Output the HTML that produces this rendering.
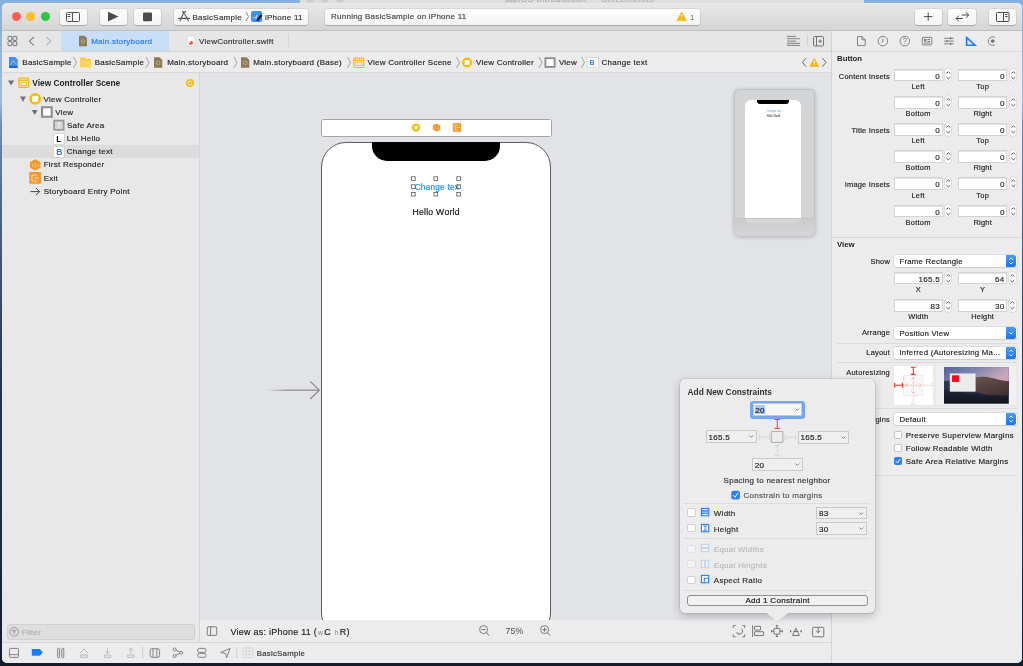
<!DOCTYPE html>
<html><head><meta charset="utf-8">
<style>
*{box-sizing:border-box;margin:0;padding:0}
html,body{width:1023px;height:666px;overflow:hidden;background:#1d2430;font-family:"Liberation Sans",sans-serif;color:#262626}
.a{position:absolute}
svg.i{position:absolute;overflow:visible}
#desk{left:0;top:0;width:1023px;height:666px;background:linear-gradient(#86b0de 0,#9bbbe0 100px,#6a8fc0 125px,#4a6890 200px,#1f3656 380px,#1a2c45 550px,#141c2a 666px)}
#bgwin{left:300px;top:0;width:564px;height:8px;background:#dedede}
#win{left:2px;top:3px;width:1019.6px;height:659.5px;border-radius:5px;background:#ececec}
#toolbar{left:2px;top:3px;width:1019.6px;height:28px;border-radius:5px 5px 0 0;background:linear-gradient(#e8e8e8,#d5d5d5);border-bottom:1px solid #bfbfbf}
.tl{width:9.2px;height:9.2px;border-radius:50%;top:12px}
.tbtn{background:linear-gradient(#fdfdfd,#f4f4f4);border-radius:3px;box-shadow:0 0 0 0.5px rgba(0,0,0,.12),0 1px 1px rgba(0,0,0,.18);height:16.3px;top:8.8px}
#tabs{left:2px;top:31px;width:829px;height:21px;background:#e6e6e6;border-bottom:1px solid #d3d3d3}
#jump{left:2px;top:52px;width:829px;height:21px;background:#ececec;border-bottom:1px solid #d8d8d8}
#nav{left:2px;top:73px;width:197px;height:569px;background:#e8e8e8}
#navsep{left:199px;top:73px;width:1px;height:569px;background:#d6d6d6}
#canvas{left:200px;top:73px;width:631px;height:547px;background:#e2e3e6;overflow:hidden}
#cbar{left:200px;top:620px;width:631px;height:22px;background:#ececec}
#dbg{left:2px;top:642px;width:829px;height:20.5px;background:#ececec;border-top:1px solid #d6d6d6;border-radius:0 0 0 5px}
#insp{left:831px;top:31px;width:190.6px;height:631.5px;background:#ececec;border-left:1px solid #d4d4d4;border-radius:0 0 5px 0}
.t{position:absolute;white-space:nowrap;font-size:8px;letter-spacing:0.25px;line-height:10px;color:#1f1f1f;-webkit-text-stroke:0.16px currentColor}
.s{font-size:7.45px;letter-spacing:0.23px;padding-top:0!important}
.b{font-weight:bold;-webkit-text-stroke:0;padding-top:0!important}
.fld{height:12.7px;background:#fff;border:0.5px solid #d3d3d3;box-shadow:inset 0 0.5px 0 #c8c8c8}
.stp{width:6.7px;height:12.7px;background:#fff;border-radius:3.3px;box-shadow:0 0 0 0.5px #cfcfcf,0 0.5px 0.5px rgba(0,0,0,.1)}
.pop{background:#fff;border-radius:2.5px;box-shadow:0 0 0 0.5px #cdcdcd,0 0.5px 1px rgba(0,0,0,.15)}
.popb{background:linear-gradient(#4e9bf9,#1a74f0);border-radius:0 2.5px 2.5px 0}
.t{padding-top:0.8px}
</style></head><body><div id="root" style="position:absolute;left:0;top:0;width:1023px;height:666px;will-change:transform;overflow:hidden">
<div id="desk" class="a"></div>
<div id="bgwin" class="a"></div>
<svg class="i" style="left:0;top:0" width="1023" height="10"><g fill="#cdcdcd"><circle cx="310" cy="-2" r="4.6"/><circle cx="325" cy="-2" r="4.6"/><circle cx="340" cy="-2" r="4.6"/></g><rect x="505.4" y="-3" width="11.4" height="5.5" fill="#c4c4c4"/></svg>
<div class="t" style="left:518px;top:-6.5px;font-size:8.93px;letter-spacing:0.28px;color:#a8a8a8;-webkit-text-stroke:0">iOS Introduction — Screenshots</div>
<div id="win" class="a"></div>
<div id="toolbar" class="a"></div>
<div class="a tl" style="left:11.6px;background:#fd5e57"></div>
<div class="a tl" style="left:26.2px;background:#febc2e"></div>
<div class="a tl" style="left:40.8px;background:#29c740"></div>
<div class="a tbtn" style="left:60px;width:27px"></div>
<div class="a tbtn" style="left:100px;width:27px"></div>
<div class="a tbtn" style="left:134px;width:27px"></div>
<div class="a tbtn" style="left:174px;width:134px"></div>
<div class="a tbtn" style="left:325px;width:375px;height:16px"></div>
<div class="a tbtn" style="left:915px;width:27px"></div>
<div class="a tbtn" style="left:948px;width:28px"></div>
<div class="a tbtn" style="left:989px;width:27px"></div>
<div id="tabs" class="a"></div>
<div id="jump" class="a"></div>
<div id="nav" class="a"></div>
<div id="navsep" class="a"></div>
<div id="canvas" class="a"></div>
<div id="cbar" class="a"></div>
<div id="dbg" class="a"></div>
<div id="insp" class="a"></div>

<!-- toolbar icons -->
<svg class="i" style="left:0;top:0" width="1023" height="31">
 <g fill="none" stroke="#555" stroke-width="1">
  <rect x="66.5" y="12.5" width="13" height="9" rx="1"/>
  <line x1="72.5" y1="12.5" x2="72.5" y2="21.5"/>
 </g>
 <g fill="#555"><rect x="67.5" y="14" width="3" height="1"/><rect x="67.5" y="16" width="3" height="1"/></g>
 <path d="M108 11.8 L118.5 16.6 L108 21.4 Z" fill="#4b4b4b"/>
 <rect x="143" y="12.4" width="9" height="8.8" rx="1" fill="#4b4b4b"/>
 <g fill="none" stroke="#5a5a5a" stroke-width="0.9">
  <path d="M182 11.9 H186.2 M184 12.2 L179.8 21.3 M184.3 13.6 L188.6 21.3 M178.2 18.4 H189.8" stroke="#555" stroke-width="1.1"/>
  <path d="M246 12 L248.5 16.6 L246 21.2" stroke="#777"/>
 </g>
 <rect x="251" y="11" width="11.2" height="11" rx="2.2" fill="#3593f5"/>
 <path d="M253 18.5 L254.8 16.8 L256 18.5 L256.8 14.5" stroke="#dff0ff" stroke-width="0.8" fill="none"/>
 <path d="M260.8 14.2 L262.2 15.8 L258 21.6 L256.4 20 Z" fill="#111"/>
 <path d="M681.6 12.2 L686.3 20.6 H676.9 Z" fill="#f5b915" stroke="#f5b915" stroke-width="0.8" stroke-linejoin="round"/>
 <rect x="681.1" y="14.6" width="1" height="3.2" fill="#fff"/><rect x="681.1" y="18.6" width="1" height="1" fill="#fff"/>
 <g stroke="#4a4a4a" stroke-width="1" fill="none">
  <path d="M924 16.6 H932.5 M928.2 12.5 V20.8"/>
  <path d="M961.6 15 H968.6 M965.8 12.2 L968.7 15 L965.8 17.8 M962.8 18.5 H956 M958.8 15.7 L956 18.5 L958.8 21.3"/>
  <rect x="996.5" y="12.5" width="12.5" height="9" rx="0.8"/>
  <line x1="1003.5" y1="12.5" x2="1003.5" y2="21.5"/>
 </g>
 <g fill="#4a4a4a"><rect x="1005" y="14" width="2.5" height="1"/><rect x="1005" y="16" width="2.5" height="1"/></g>
</svg>
<div class="t" style="left:192.5px;top:12px;color:#333">BasicSample</div>
<div class="t" style="left:265px;top:12px;color:#333">iPhone 11</div>
<div class="t" style="left:331px;top:11.5px;color:#444">Running BasicSample on iPhone 11</div>
<div class="t" style="left:690px;top:12px;color:#666;font-size:7.52px;letter-spacing:0.24px;-webkit-text-stroke:0">1</div>

<!-- tab bar -->
<div class="a" style="left:61px;top:31px;width:107.5px;height:20px;background:#c8ddf6"></div>
<div class="a" style="left:288px;top:34px;width:1px;height:14px;background:#d6d6d6"></div>
<div class="a" style="left:807px;top:36px;width:1px;height:10px;background:#d0d0d0"></div>
<svg class="i" style="left:0;top:0" width="831" height="73">
 <g fill="none" stroke="#6a6a6a" stroke-width="0.9">
  <rect x="8" y="36.4" width="3.8" height="4" rx="0.6"/><rect x="13" y="36.4" width="3.8" height="4" rx="0.6"/>
  <rect x="8" y="41.6" width="3.8" height="4" rx="0.6"/><rect x="13" y="41.6" width="3.8" height="4" rx="0.6"/>
  <path d="M34 37 L29.2 41.2 L34 45.4" stroke="#555" stroke-width="1"/>
  <path d="M46.2 37 L50.8 41.2 L46.2 45.4" stroke="#a0a0a0" stroke-width="1"/>
 </g>
 <!-- storyboard icon tab -->
 <path d="M79 35.8 H84.5 L87 38.3 V46.3 H79 Z" fill="#8d7a58"/>
 <circle cx="83" cy="41.5" r="1.8" fill="none" stroke="#c9b78f" stroke-width="0.8"/>
 <!-- swift file icon -->
 <path d="M187 36 H192.5 L195 38.5 V46.3 H187 Z" fill="#fafafa" stroke="#cfcfcf" stroke-width="0.5"/>
 <path d="M188.5 42 q2 2 4.5 1.5 q-1 1.5 -3.5 1.3 z" fill="#f05138"/>
 <circle cx="191.5" cy="42.5" r="1.5" fill="#f05138"/>
 <!-- right icons -->
 <g stroke="#777" stroke-width="0.9">
  <line x1="787" y1="36.4" x2="796" y2="36.4"/><line x1="787" y1="38.7" x2="800" y2="38.7"/>
  <line x1="787" y1="41.1" x2="796" y2="41.1"/><line x1="787" y1="43.3" x2="800" y2="43.3"/>
  <line x1="787" y1="45.4" x2="800" y2="45.4"/>
 </g>
 <g fill="none" stroke="#666" stroke-width="0.9">
  <rect x="813.5" y="36.5" width="10" height="9.5" rx="1"/>
  <line x1="816.5" y1="36.5" x2="816.5" y2="46"/>
  <path d="M818.5 41.2 H822 M820.2 39.5 V43"/>
 </g>
 <!-- jump bar icons -->
 <path d="M9 57 H15 L17.6 59.6 V68 H9 Z" fill="#3f8ef2"/>
 <path d="M9 66 H17.6 V68 H9 Z" fill="#1f6ad8"/>
 <path d="M10.5 64.5 L13.3 60.5 L16 64.5" stroke="#bfe0ff" stroke-width="0.7" fill="none"/>
 <path d="M80.2 57.6 H85 L86 58.8 H91.1 V67.2 H80.2 Z" fill="#f7c744"/>
 <path d="M80.2 59.8 H91.1 V67.2 H80.2 Z" fill="#fbd45a"/>
 <path d="M154 57.2 H159.5 L162.3 60 V67.8 H154 Z" fill="#8d7a58"/>
 <circle cx="158.2" cy="62.8" r="1.8" fill="none" stroke="#c9b78f" stroke-width="0.8"/>
 <path d="M241 57.2 H246.5 L249.3 60 V67.8 H241 Z" fill="#8d7a58"/>
 <circle cx="245.2" cy="62.8" r="1.8" fill="none" stroke="#c9b78f" stroke-width="0.8"/>
 <!-- scene icon -->
 <rect x="353.8" y="58" width="10" height="9.5" rx="1" fill="none" stroke="#f4b400" stroke-width="1.1"/>
 <path d="M353.8 60.5 H363.8" stroke="#f4b400" stroke-width="1"/>
 <path d="M355.5 58 v2.3 M357.5 58 v2.3 M359.5 58 v2.3 M361.5 58 v2.3" stroke="#f4b400" stroke-width="0.6"/>
 <rect x="355.8" y="62.2" width="6" height="3.3" fill="none" stroke="#f4b400" stroke-width="0.7"/>
 <!-- VC icon -->
 <circle cx="467.1" cy="62.5" r="5" fill="#fcb900"/>
 <rect x="464.6" y="60" width="5" height="5" fill="#fff"/>
 <!-- view icon -->
 <rect x="544.5" y="57.3" width="11" height="10.5" fill="#8a8a8a"/>
 <rect x="546.3" y="59.1" width="7.4" height="6.9" fill="#fff"/>
 <!-- B icon -->
 <rect x="587" y="57.3" width="11.4" height="10.5" fill="#fff" stroke="#c8c8c8" stroke-width="0.6"/>
 <g fill="none" stroke="#8e8e8e" stroke-width="0.8">
  <path d="M73.5 57 L76.5 62.4 L73.5 67.8"/>
  <path d="M146 57 L149 62.4 L146 67.8"/>
  <path d="M234 57 L237 62.4 L234 67.8"/>
  <path d="M347.5 57 L350.5 62.4 L347.5 67.8"/>
  <path d="M456.5 57 L459.5 62.4 L456.5 67.8"/>
  <path d="M539 57 L542 62.4 L539 67.8"/>
  <path d="M581.5 57 L584.5 62.4 L581.5 67.8"/>
 </g>
 <g fill="none" stroke="#666" stroke-width="1">
  <path d="M806 58.2 L802.5 62.4 L806 66.6"/>
  <path d="M822.5 58.2 L826 62.4 L822.5 66.6"/>
 </g>
 <path d="M814.2 58.2 L818.6 66.4 H809.8 Z" fill="#f5b915" stroke="#f5b915" stroke-width="0.8" stroke-linejoin="round"/>
 <rect x="813.7" y="60.4" width="1" height="3.2" fill="#fff"/><rect x="813.7" y="64.4" width="1" height="1" fill="#fff"/>
</svg>
<div class="t" style="left:91.2px;top:36px;color:#1f7bf0">Main.storyboard</div>
<div class="t" style="left:199px;top:36px;color:#333">ViewController.swift</div>
<div class="t" style="left:22.3px;top:57.3px">BasicSample</div>
<div class="t" style="left:94.7px;top:57.3px">BasicSample</div>
<div class="t" style="left:167.2px;top:57.3px">Main.storyboard</div>
<div class="t" style="left:253.2px;top:57.3px">Main.storyboard (Base)</div>
<div class="t" style="left:367.5px;top:57.3px">View Controller Scene</div>
<div class="t" style="left:476px;top:57.3px">View Controller</div>
<div class="t" style="left:558.9px;top:57.3px">View</div>
<div class="t" style="left:601.6px;top:57.3px">Change text</div>
<div class="t b" style="letter-spacing:0;left:589.6px;top:57.8px;color:#2f7cf6;font-size:7px">B</div>

<!-- navigator -->
<div class="a" style="left:2px;top:145px;width:197px;height:13px;background:#dcdcdc"></div>
<svg class="i" style="left:0;top:0" width="200" height="642">
 <g fill="#707070">
  <path d="M8 80.4 H14.2 L11.1 85.5 Z"/>
  <path d="M20 96.6 H26 L23 101.8 Z"/>
  <path d="M31.8 110 H37.6 L34.7 115 Z"/>
 </g>
 <!-- scene icon -->
 <rect x="18.9" y="78" width="9.6" height="9.4" rx="1.2" fill="none" stroke="#f4b400" stroke-width="1.2"/>
 <path d="M18.9 80.7 H28.5" stroke="#f4b400" stroke-width="1"/>
 <path d="M20.8 78 v2.5 M22.8 78 v2.5 M24.8 78 v2.5 M26.8 78 v2.5" stroke="#f4b400" stroke-width="0.6"/>
 <rect x="20.9" y="82.7" width="5.6" height="2.8" fill="none" stroke="#f4b400" stroke-width="0.8"/>
 <!-- vc -->
 <circle cx="35.2" cy="98.9" r="5.9" fill="#fcb900"/>
 <rect x="32.2" y="95.9" width="6" height="6" fill="#fff"/>
 <!-- view -->
 <rect x="41" y="106.2" width="11.8" height="11.6" fill="#8f8f8f"/>
 <rect x="43.2" y="108.3" width="7.4" height="7.4" fill="#fff"/>
 <!-- safe area -->
 <rect x="53.3" y="119.7" width="11.2" height="11" fill="#9a9a9a"/>
 <rect x="55.2" y="121.6" width="7.4" height="7.2" fill="#e6e6e6"/>
 <path d="M57 122.5 v5.5 M60.8 122.5 v5.5" stroke="#aaa" stroke-width="0.6"/>
 <!-- L -->
 <rect x="53.4" y="133.4" width="11" height="10.8" fill="#fff" stroke="#c4c4c4" stroke-width="0.6"/>
 <!-- B -->
 <rect x="53.4" y="146.6" width="11" height="10.8" fill="#fff" stroke="#c4c4c4" stroke-width="0.6"/>
 <!-- first responder hex -->
 <path d="M35.3 159.2 L40.5 162 V167.8 L35.3 170.6 L30 167.8 V162 Z" fill="#f29a2e"/>
 <path d="M32.5 164 v3 M38 164 v3 M35.3 163 v4.5" stroke="#fbd7a6" stroke-width="0.6"/>
 <!-- exit -->
 <rect x="29.3" y="172" width="11.7" height="11.8" rx="1" fill="#f29a2e"/>
 <path d="M37 175 H32 V181 H37 M34.5 178 H39" stroke="#fde2bf" stroke-width="0.9" fill="none"/>
 <!-- arrow -->
 <path d="M30.5 191.6 H39.5 M36 188 L39.6 191.6 L36 195.2" stroke="#333" stroke-width="0.9" fill="none"/>
 <!-- scene exit icon right -->
 <circle cx="190" cy="83" r="3.2" fill="none" stroke="#fcb900" stroke-width="1.6"/>
 <path d="M188.8 82 h1.6 v-1 l1.5 2 l-1.5 2 v-1 h-1.6 z" fill="#fcb900"/>
</svg>
<div class="t b" style="letter-spacing:0;left:32.3px;top:77.9px;font-size:8.35px">View Controller Scene</div>
<div class="t" style="left:43.5px;top:93.8px">View Controller</div>
<div class="t" style="left:55.2px;top:106.8px">View</div>
<div class="t" style="left:67px;top:120.2px">Safe Area</div>
<div class="t" style="left:66.8px;top:133.4px">Lbl Hello</div>
<div class="t" style="left:66.8px;top:146.7px">Change text</div>
<div class="t" style="left:43.7px;top:159.6px">First Responder</div>
<div class="t" style="left:43.7px;top:173px">Exit</div>
<div class="t" style="left:43.7px;top:186.1px">Storyboard Entry Point</div>
<div class="t b" style="letter-spacing:0;left:56.3px;top:134px;font-size:8.5px;color:#111">L</div>
<div class="t b" style="letter-spacing:0;left:56.2px;top:147.3px;font-size:8.5px;color:#2f7cf6">B</div>
<!-- filter -->
<div class="a" style="left:6.5px;top:624px;width:188.5px;height:15.5px;border-radius:3px;background:#dedede;border:0.5px solid #d0d0d0"></div>
<svg class="i" style="left:0;top:0" width="200" height="642">
 <circle cx="14.1" cy="631.8" r="4.4" fill="none" stroke="#8a8a8a" stroke-width="0.8"/>
 <path d="M11.8 630.3 H16.4 M12.6 631.8 H15.6 M13.4 633.3 H14.8" stroke="#8a8a8a" stroke-width="0.8"/>
</svg>
<div class="t" style="left:21.8px;top:627px;color:#b0b0b0">Filter</div>

<!-- canvas content -->
<div class="a" style="left:200px;top:73px;width:631px;height:547px;overflow:hidden"><div class="a" style="left:-200px;top:-73px;width:1023px;height:666px">
<div class="a" style="left:321px;top:118.5px;width:230.5px;height:18.2px;background:#fff;border:1px solid #a5a5a5;border-radius:2.5px"></div>
<svg class="i" style="left:0;top:0" width="831" height="642">
 <circle cx="416" cy="127.6" r="4.2" fill="#fcb900"/><rect x="414.3" y="125.9" width="3.4" height="3.4" fill="#fff"/>
 <path d="M436.5 123.4 L440.2 125.5 V129.7 L436.5 131.8 L432.8 129.7 V125.5 Z" fill="#f29a2e"/>
 <path d="M434.6 126.8 v2.2 M438.4 126.8 v2.2" stroke="#fbd7a6" stroke-width="0.5"/>
 <rect x="452.8" y="123.2" width="8.4" height="8.6" fill="#f29a2e"/>
 <path d="M458 125.2 H455 V129.8 H458 M456.5 127.5 H460" stroke="#fde2bf" stroke-width="0.7" fill="none"/>
 <!-- arrow -->
 <defs><linearGradient id="ag" x1="0" x2="1"><stop offset="0" stop-color="#8a8a8a" stop-opacity="0"/><stop offset="0.4" stop-color="#8a8a8a" stop-opacity="1"/></linearGradient></defs>
 <rect x="266" y="389.6" width="53.5" height="1.2" fill="url(#ag)"/>
 <path d="M310.3 381.4 L319.3 390.2 L310.3 399" stroke="#8a8a8a" stroke-width="1.2" fill="none"/>
</svg>
<!-- phone -->
<div class="a" style="left:321px;top:142.4px;width:230px;height:496px;background:#fff;border:1px solid #5a5a5a;border-radius:25px"></div>
<div class="a" style="left:372px;top:142.4px;width:128px;height:18.8px;background:#000;border-radius:0 0 15px 15px"></div>
<!-- handles -->
<svg class="i" style="left:0;top:0" width="831" height="642">
 <g fill="#fff" stroke="#555" stroke-width="0.8">
  <rect x="411.6" y="176.8" width="3.6" height="3.6"/><rect x="434" y="176.8" width="3.6" height="3.6"/><rect x="456.8" y="176.8" width="3.6" height="3.6"/>
  <rect x="411.6" y="192.4" width="3.6" height="3.6"/><rect x="434" y="192.4" width="3.6" height="3.6"/><rect x="456.8" y="192.4" width="3.6" height="3.6"/>
 </g>
</svg>
<div class="a" style="left:413.4px;top:177px;width:45.8px;height:17px;overflow:hidden"><div class="t" style="left:1.3px;top:4.9px;color:#1a8cff;font-size:8.18px;letter-spacing:0.26px">Change text</div></div>
<svg class="i" style="left:0;top:0" width="831" height="642">
 <g fill="none" stroke="#555" stroke-width="0.8">
  <rect x="411.6" y="184.8" width="3.6" height="3.6"/><rect x="456.8" y="184.8" width="3.6" height="3.6"/>
 </g>
</svg>
<div class="t" style="left:412.4px;top:206px;color:#111;font-size:8.65px;letter-spacing:0.28px;line-height:10px">Hello World</div>
<!-- minimap -->
<div class="a" style="left:733.6px;top:88.6px;width:81.5px;height:147.4px;background:#d3d4d6;border-radius:5px;box-shadow:0 1px 4px rgba(0,0,0,.22);border:0.5px solid #c2c3c5"></div>
<div class="a" style="left:745px;top:99.6px;width:56px;height:123px;background:#fff;border-radius:6px"></div>
<div class="a" style="left:757px;top:99.6px;width:32px;height:4.8px;background:#000;border-radius:0 0 3px 3px"></div>
<div class="a" style="left:766.8px;top:109.6px;font-size:2.7px;line-height:3px;color:#5d9ff0;white-space:nowrap;font-family:'Liberation Sans'">Change text</div>
<div class="a" style="left:766.8px;top:115.3px;font-size:2.6px;line-height:3px;color:#222;white-space:nowrap;font-family:'Liberation Sans'">Hello World</div>
<div class="a" style="left:733.8px;top:218.3px;width:81.2px;height:17.6px;background:linear-gradient(rgba(200,200,200,.75),rgba(215,215,215,.9));border-radius:0 0 5px 5px;border-top:0.6px solid #c4c4c4"></div>
</div></div>


<!-- inspector -->
<div class="a" style="left:832px;top:51px;width:189px;height:1px;background:#d6d6d6"></div>
<div class="a" style="left:832px;top:237px;width:189px;height:1px;background:#d6d6d6"></div>
<svg class="i" style="left:0;top:0" width="1023" height="666">
 <g fill="none" stroke="#777" stroke-width="0.9">
  <path d="M857.5 36.6 H862 L865.2 39.8 V45.6 H857.5 Z M862 36.6 V39.8 H865.2"/>
  <circle cx="882.9" cy="41.1" r="4.8"/><path d="M882.9 38.5 V41.3 L881.3 42.6"/>
  <circle cx="904.8" cy="41.1" r="4.8"/>
  <rect x="922.3" y="37.4" width="9.5" height="7.5" rx="0.5"/>
  <path d="M944 38.3 H953.8 M944 41.1 H953.8 M944 43.9 H953.8"/>
  <circle cx="992.6" cy="41.1" r="4.3"/>
 </g>
 <path d="M903.3 39.6 q0 -1.6 1.6 -1.6 q1.6 0 1.6 1.5 q0 1 -1.2 1.5 q-0.5 0.3 -0.5 1.1" fill="none" stroke="#777" stroke-width="0.8"/>
 <rect x="904.4" y="43.3" width="0.9" height="0.9" fill="#777"/>
 <g fill="#777"><rect x="924" y="39" width="2.5" height="2.5"/><rect x="927.5" y="39" width="2.5" height="1"/><rect x="927.5" y="41" width="2.5" height="1"/><rect x="923.8" y="42.6" width="6.5" height="0.9"/>
 <rect x="950" y="37.2" width="1.2" height="2.2"/><rect x="946.5" y="40" width="1.2" height="2.2"/><rect x="950" y="42.8" width="1.2" height="2.2"/></g>
 <path d="M966.6 37.6 V45.2 H975 Z" fill="none" stroke="#1b7cf5" stroke-width="1.6" stroke-linejoin="miter"/>
 <circle cx="992.6" cy="41.1" r="1.8" fill="#777"/><path d="M992.6 41.1 H997.5" stroke="#777" stroke-width="0.9"/>
 <rect x="995" y="36" width="4" height="10" fill="#ececec"/>
 <path d="M995.5 37.5 L996.8 36.5" stroke="#777" stroke-width="0"/>
</svg>
<div class="t b s" style="letter-spacing:0;left:837px;top:54.2px;font-size:7.8px;color:#222">Button</div>
<div class="a fld" style="left:893.5px;top:68.7px;width:49.2px"></div>
<div class="t" style="left:893.5px;top:70.85000000000001px;width:46.6px;text-align:right;font-size:8.08px;letter-spacing:0.26px">0</div>
<div class="a stp" style="left:944.7px;top:68.7px"></div>
<svg class="i" style="left:944.7px;top:68.7px" width="7" height="13"><path d="M1.4 4.5 L3.35 2.8 L5.3 4.5 M1.4 8.1 L3.35 9.9 L5.3 8.1" fill="none" stroke="#4a4a4a" stroke-width="0.95"/></svg>
<div class="a fld" style="left:958.2px;top:68.7px;width:49.2px"></div>
<div class="t" style="left:958.2px;top:70.85000000000001px;width:46.6px;text-align:right;font-size:8.08px;letter-spacing:0.26px">0</div>
<div class="a stp" style="left:1009.6px;top:68.7px"></div>
<svg class="i" style="left:1009.6px;top:68.7px" width="7" height="13"><path d="M1.4 4.5 L3.35 2.8 L5.3 4.5 M1.4 8.1 L3.35 9.9 L5.3 8.1" fill="none" stroke="#4a4a4a" stroke-width="0.95"/></svg>
<div class="t s" style="left:888.1px;top:81.9px;width:60px;text-align:center">Left</div>
<div class="t s" style="left:952.7px;top:81.9px;width:60px;text-align:center">Top</div>
<div class="t s" style="left:810px;top:71.5px;width:80px;text-align:right">Content Insets</div>
<div class="a fld" style="left:893.5px;top:95.9px;width:49.2px"></div>
<div class="t" style="left:893.5px;top:98.05000000000001px;width:46.6px;text-align:right;font-size:8.08px;letter-spacing:0.26px">0</div>
<div class="a stp" style="left:944.7px;top:95.9px"></div>
<svg class="i" style="left:944.7px;top:95.9px" width="7" height="13"><path d="M1.4 4.5 L3.35 2.8 L5.3 4.5 M1.4 8.1 L3.35 9.9 L5.3 8.1" fill="none" stroke="#4a4a4a" stroke-width="0.95"/></svg>
<div class="a fld" style="left:958.2px;top:95.9px;width:49.2px"></div>
<div class="t" style="left:958.2px;top:98.05000000000001px;width:46.6px;text-align:right;font-size:8.08px;letter-spacing:0.26px">0</div>
<div class="a stp" style="left:1009.6px;top:95.9px"></div>
<svg class="i" style="left:1009.6px;top:95.9px" width="7" height="13"><path d="M1.4 4.5 L3.35 2.8 L5.3 4.5 M1.4 8.1 L3.35 9.9 L5.3 8.1" fill="none" stroke="#4a4a4a" stroke-width="0.95"/></svg>
<div class="t s" style="left:888.1px;top:109.1px;width:60px;text-align:center">Bottom</div>
<div class="t s" style="left:952.7px;top:109.1px;width:60px;text-align:center">Right</div>
<div class="a fld" style="left:893.5px;top:123.1px;width:49.2px"></div>
<div class="t" style="left:893.5px;top:125.25px;width:46.6px;text-align:right;font-size:8.08px;letter-spacing:0.26px">0</div>
<div class="a stp" style="left:944.7px;top:123.1px"></div>
<svg class="i" style="left:944.7px;top:123.1px" width="7" height="13"><path d="M1.4 4.5 L3.35 2.8 L5.3 4.5 M1.4 8.1 L3.35 9.9 L5.3 8.1" fill="none" stroke="#4a4a4a" stroke-width="0.95"/></svg>
<div class="a fld" style="left:958.2px;top:123.1px;width:49.2px"></div>
<div class="t" style="left:958.2px;top:125.25px;width:46.6px;text-align:right;font-size:8.08px;letter-spacing:0.26px">0</div>
<div class="a stp" style="left:1009.6px;top:123.1px"></div>
<svg class="i" style="left:1009.6px;top:123.1px" width="7" height="13"><path d="M1.4 4.5 L3.35 2.8 L5.3 4.5 M1.4 8.1 L3.35 9.9 L5.3 8.1" fill="none" stroke="#4a4a4a" stroke-width="0.95"/></svg>
<div class="t s" style="left:888.1px;top:136.29999999999998px;width:60px;text-align:center">Left</div>
<div class="t s" style="left:952.7px;top:136.29999999999998px;width:60px;text-align:center">Top</div>
<div class="t s" style="left:810px;top:125.89999999999998px;width:80px;text-align:right">Title Insets</div>
<div class="a fld" style="left:893.5px;top:150.2px;width:49.2px"></div>
<div class="t" style="left:893.5px;top:152.35px;width:46.6px;text-align:right;font-size:8.08px;letter-spacing:0.26px">0</div>
<div class="a stp" style="left:944.7px;top:150.2px"></div>
<svg class="i" style="left:944.7px;top:150.2px" width="7" height="13"><path d="M1.4 4.5 L3.35 2.8 L5.3 4.5 M1.4 8.1 L3.35 9.9 L5.3 8.1" fill="none" stroke="#4a4a4a" stroke-width="0.95"/></svg>
<div class="a fld" style="left:958.2px;top:150.2px;width:49.2px"></div>
<div class="t" style="left:958.2px;top:152.35px;width:46.6px;text-align:right;font-size:8.08px;letter-spacing:0.26px">0</div>
<div class="a stp" style="left:1009.6px;top:150.2px"></div>
<svg class="i" style="left:1009.6px;top:150.2px" width="7" height="13"><path d="M1.4 4.5 L3.35 2.8 L5.3 4.5 M1.4 8.1 L3.35 9.9 L5.3 8.1" fill="none" stroke="#4a4a4a" stroke-width="0.95"/></svg>
<div class="t s" style="left:888.1px;top:163.39999999999998px;width:60px;text-align:center">Bottom</div>
<div class="t s" style="left:952.7px;top:163.39999999999998px;width:60px;text-align:center">Right</div>
<div class="a fld" style="left:893.5px;top:177.4px;width:49.2px"></div>
<div class="t" style="left:893.5px;top:179.55px;width:46.6px;text-align:right;font-size:8.08px;letter-spacing:0.26px">0</div>
<div class="a stp" style="left:944.7px;top:177.4px"></div>
<svg class="i" style="left:944.7px;top:177.4px" width="7" height="13"><path d="M1.4 4.5 L3.35 2.8 L5.3 4.5 M1.4 8.1 L3.35 9.9 L5.3 8.1" fill="none" stroke="#4a4a4a" stroke-width="0.95"/></svg>
<div class="a fld" style="left:958.2px;top:177.4px;width:49.2px"></div>
<div class="t" style="left:958.2px;top:179.55px;width:46.6px;text-align:right;font-size:8.08px;letter-spacing:0.26px">0</div>
<div class="a stp" style="left:1009.6px;top:177.4px"></div>
<svg class="i" style="left:1009.6px;top:177.4px" width="7" height="13"><path d="M1.4 4.5 L3.35 2.8 L5.3 4.5 M1.4 8.1 L3.35 9.9 L5.3 8.1" fill="none" stroke="#4a4a4a" stroke-width="0.95"/></svg>
<div class="t s" style="left:888.1px;top:190.6px;width:60px;text-align:center">Left</div>
<div class="t s" style="left:952.7px;top:190.6px;width:60px;text-align:center">Top</div>
<div class="t s" style="left:810px;top:180.2px;width:80px;text-align:right">Image Insets</div>
<div class="a fld" style="left:893.5px;top:204.6px;width:49.2px"></div>
<div class="t" style="left:893.5px;top:206.75px;width:46.6px;text-align:right;font-size:8.08px;letter-spacing:0.26px">0</div>
<div class="a stp" style="left:944.7px;top:204.6px"></div>
<svg class="i" style="left:944.7px;top:204.6px" width="7" height="13"><path d="M1.4 4.5 L3.35 2.8 L5.3 4.5 M1.4 8.1 L3.35 9.9 L5.3 8.1" fill="none" stroke="#4a4a4a" stroke-width="0.95"/></svg>
<div class="a fld" style="left:958.2px;top:204.6px;width:49.2px"></div>
<div class="t" style="left:958.2px;top:206.75px;width:46.6px;text-align:right;font-size:8.08px;letter-spacing:0.26px">0</div>
<div class="a stp" style="left:1009.6px;top:204.6px"></div>
<svg class="i" style="left:1009.6px;top:204.6px" width="7" height="13"><path d="M1.4 4.5 L3.35 2.8 L5.3 4.5 M1.4 8.1 L3.35 9.9 L5.3 8.1" fill="none" stroke="#4a4a4a" stroke-width="0.95"/></svg>
<div class="t s" style="left:888.1px;top:217.79999999999998px;width:60px;text-align:center">Bottom</div>
<div class="t s" style="left:952.7px;top:217.79999999999998px;width:60px;text-align:center">Right</div>
<div class="t b s" style="letter-spacing:0;left:837px;top:240px;font-size:7.8px;color:#222">View</div>
<div class="a pop" style="left:894px;top:255.3px;width:122.5px;height:12px"></div>
<div class="a popb" style="left:1006.4px;top:255.3px;width:10.1px;height:12px"></div>
<svg class="i" style="left:1006.4px;top:255.3px" width="10" height="12"><path d="M3.3 4.7 L5.05 3 L6.8 4.7 M3.3 7.3 L5.05 9 L6.8 7.3" fill="none" stroke="#fff" stroke-width="0.9"/></svg>
<div class="t" style="left:899.4px;top:256.40000000000003px;color:#222;font-size:7.80px;letter-spacing:0.25px">Frame Rectangle</div>
<div class="t s" style="left:810px;top:256.90000000000003px;width:80px;text-align:right">Show</div>
<div class="a fld" style="left:894px;top:271.8px;width:48.7px"></div>
<div class="t" style="left:894px;top:273.95px;width:46.1px;text-align:right;font-size:8.08px;letter-spacing:0.26px">165.5</div>
<div class="a stp" style="left:944.6px;top:271.8px"></div>
<svg class="i" style="left:944.6px;top:271.8px" width="7" height="13"><path d="M1.4 4.5 L3.35 2.8 L5.3 4.5 M1.4 8.1 L3.35 9.9 L5.3 8.1" fill="none" stroke="#4a4a4a" stroke-width="0.95"/></svg>
<div class="a fld" style="left:958.3px;top:271.8px;width:48.9px"></div>
<div class="t" style="left:958.3px;top:273.95px;width:46.3px;text-align:right;font-size:8.08px;letter-spacing:0.26px">64</div>
<div class="a stp" style="left:1009.3px;top:271.8px"></div>
<svg class="i" style="left:1009.3px;top:271.8px" width="7" height="13"><path d="M1.4 4.5 L3.35 2.8 L5.3 4.5 M1.4 8.1 L3.35 9.9 L5.3 8.1" fill="none" stroke="#4a4a4a" stroke-width="0.95"/></svg>
<div class="t s" style="left:888.3px;top:284.70000000000005px;width:60px;text-align:center">X</div>
<div class="t s" style="left:952.7px;top:284.70000000000005px;width:60px;text-align:center">Y</div>
<div class="a fld" style="left:894px;top:299px;width:48.7px"></div>
<div class="t" style="left:894px;top:301.15px;width:46.1px;text-align:right;font-size:8.08px;letter-spacing:0.26px">83</div>
<div class="a stp" style="left:944.6px;top:299px"></div>
<svg class="i" style="left:944.6px;top:299px" width="7" height="13"><path d="M1.4 4.5 L3.35 2.8 L5.3 4.5 M1.4 8.1 L3.35 9.9 L5.3 8.1" fill="none" stroke="#4a4a4a" stroke-width="0.95"/></svg>
<div class="a fld" style="left:958.3px;top:299px;width:48.9px"></div>
<div class="t" style="left:958.3px;top:301.15px;width:46.3px;text-align:right;font-size:8.08px;letter-spacing:0.26px">30</div>
<div class="a stp" style="left:1009.3px;top:299px"></div>
<svg class="i" style="left:1009.3px;top:299px" width="7" height="13"><path d="M1.4 4.5 L3.35 2.8 L5.3 4.5 M1.4 8.1 L3.35 9.9 L5.3 8.1" fill="none" stroke="#4a4a4a" stroke-width="0.95"/></svg>
<div class="t s" style="left:888.3px;top:311.90000000000003px;width:60px;text-align:center">Width</div>
<div class="t s" style="left:952.7px;top:311.90000000000003px;width:60px;text-align:center">Height</div>
<div class="a pop" style="left:894px;top:326.7px;width:122.5px;height:12px"></div>
<div class="a popb" style="left:1006.4px;top:326.7px;width:10.1px;height:12px"></div>
<svg class="i" style="left:1006.4px;top:326.7px" width="10" height="12"><path d="M3.3 5.2 L5.05 7 L6.8 5.2" fill="none" stroke="#fff" stroke-width="0.9"/></svg>
<div class="t" style="left:899.4px;top:327.8px;color:#222;font-size:7.80px;letter-spacing:0.25px">Position View</div>
<div class="t s" style="left:810px;top:328.20000000000005px;width:80px;text-align:right">Arrange</div>
<div class="a" style="left:837px;top:342.5px;width:180px;height:1px;background:#dadada"></div>
<div class="a pop" style="left:894px;top:346.5px;width:122.5px;height:12px"></div>
<div class="a popb" style="left:1006.4px;top:346.5px;width:10.1px;height:12px"></div>
<svg class="i" style="left:1006.4px;top:346.5px" width="10" height="12"><path d="M3.3 4.7 L5.05 3 L6.8 4.7 M3.3 7.3 L5.05 9 L6.8 7.3" fill="none" stroke="#fff" stroke-width="0.9"/></svg>
<div class="t" style="left:899.4px;top:347.6px;color:#222;font-size:7.80px;letter-spacing:0.25px">Inferred (Autoresizing Ma...</div>
<div class="t s" style="left:810px;top:348.0px;width:80px;text-align:right">Layout</div>
<div class="a" style="left:837px;top:361.7px;width:180px;height:1px;background:#dadada"></div>
<div class="t s" style="left:810px;top:368.20000000000005px;width:80px;text-align:right">Autoresizing</div>
<svg class="i" style="left:0;top:0" width="1023" height="666">
 <rect x="893.6" y="365.6" width="39.6" height="39.6" fill="#fff" stroke="#e2e2e2" stroke-width="0.5"/>
 <rect x="903.3" y="375.3" width="19.7" height="20" fill="#f7f7f7" stroke="#e3e3e3" stroke-width="0.6"/>
 <path d="M913.3 367.2 V374.4 M910.9 367.2 H915.7 M910.9 374.4 H915.7" stroke="#ff2d21" stroke-width="1.1" fill="none"/>
 <path d="M894.8 385.3 H902.4 M894.8 382.8 V387.8 M902.4 382.8 V387.8" stroke="#ff2d21" stroke-width="1.1" fill="none"/>
 <g stroke="#ff8b84" stroke-width="0.6" stroke-dasharray="1 0.8" fill="none">
  <path d="M923.5 385.3 H932 M932 383 V387.6"/>
  <path d="M913.3 395.7 V404.2 M911 404.2 H915.6"/>
  <path d="M905.5 385.3 H921 M913.3 377.4 V393.2"/>
 </g>
 <g stroke="#ff8b84" stroke-width="0.6" fill="none">
  <path d="M907.3 383.5 L905.5 385.3 L907.3 387.1 M919.2 383.5 L921 385.3 L919.2 387.1 M911.5 379.2 L913.3 377.4 L915.1 379.2 M911.5 391.4 L913.3 393.2 L915.1 391.4"/>
 </g>
 <rect x="935.5" y="365.6" width="81" height="39.6" fill="#f0f0f0" stroke="#e2e2e2" stroke-width="0.5"/>
 <defs>
  <linearGradient id="sky" x1="0" y1="0" x2="1" y2="0.3"><stop offset="0" stop-color="#55609a"/><stop offset="0.5" stop-color="#7f86b2"/><stop offset="1" stop-color="#c8a6b8"/></linearGradient>
  <linearGradient id="sea" x1="0" y1="0" x2="0" y2="1"><stop offset="0" stop-color="#39405c"/><stop offset="1" stop-color="#11141e"/></linearGradient>
  <linearGradient id="isl" x1="0" y1="0" x2="1" y2="1"><stop offset="0" stop-color="#7a5f58"/><stop offset="1" stop-color="#3c2e30"/></linearGradient>
 </defs>
 <rect x="944" y="367.1" width="64.8" height="36.6" fill="url(#sea)"/>
 <rect x="944" y="367.1" width="64.8" height="14" fill="url(#sky)"/>
 <path d="M944 381 Q960 379 975 377.5 Q985 376 992 378 Q1000 380 1008.8 381.5 V395 Q990 397 975 392 Z" fill="url(#isl)"/>
 <path d="M944 381 L975 379 L975 394 Q960 392 944 390 Z" fill="#2e3550" opacity="0.8"/>
 <rect x="950" y="373.7" width="25.4" height="17.8" fill="#ebebeb" stroke="#cfcfcf" stroke-width="0.5"/>
 <rect x="952" y="375.3" width="7" height="6.7" fill="#fa0d1b"/>
</svg>
<div class="a" style="left:837px;top:407.8px;width:180px;height:1px;background:#dadada"></div>
<div class="a pop" style="left:894px;top:413.2px;width:122.5px;height:12px"></div>
<div class="a popb" style="left:1006.4px;top:413.2px;width:10.1px;height:12px"></div>
<svg class="i" style="left:1006.4px;top:413.2px" width="10" height="12"><path d="M3.3 4.7 L5.05 3 L6.8 4.7 M3.3 7.3 L5.05 9 L6.8 7.3" fill="none" stroke="#fff" stroke-width="0.9"/></svg>
<div class="t" style="left:899.4px;top:414.3px;color:#222;font-size:7.80px;letter-spacing:0.25px">Default</div>
<div class="t s" style="left:810px;top:414.8px;width:80px;text-align:right">Margins</div>
<div class="a" style="left:893.8px;top:431.1px;width:8px;height:8px;border-radius:2px;background:#fff;border:0.5px solid #c4c4c4"></div>
<div class="t" style="left:905.8px;top:430.3px;font-size:7.94px;letter-spacing:0.25px">Preserve Superview Margins</div>
<div class="a" style="left:893.8px;top:444.1px;width:8px;height:8px;border-radius:2px;background:#fff;border:0.5px solid #c4c4c4"></div>
<div class="t" style="left:905.8px;top:443.3px;font-size:7.94px;letter-spacing:0.25px">Follow Readable Width</div>
<div class="a" style="left:893.8px;top:457.3px;width:8px;height:8px;border-radius:2px;background:#2b7ef7"></div>
<svg class="i" style="left:893.8px;top:457.3px" width="8" height="8"><path d="M1.8 4.2 L3.4 5.9 L6.3 2" fill="none" stroke="#fff" stroke-width="1"/></svg>
<div class="t" style="left:905.8px;top:456.5px;font-size:7.94px;letter-spacing:0.25px">Safe Area Relative Margins</div>
<div class="a" style="left:837px;top:475.2px;width:180px;height:1px;background:#dadada"></div>
<!-- canvas bottom bar -->
<svg class="i" style="left:0;top:0" width="1023" height="666">
 <g fill="none" stroke="#707070" stroke-width="0.9">
  <rect x="207.3" y="626.8" width="9.4" height="8.6" rx="0.8"/>
  <path d="M210.6 626.8 V635.4"/>
  <circle cx="483.6" cy="629.6" r="4"/><path d="M486.6 632.6 L489 635.6 M481.6 629.6 H485.6" stroke-width="1"/>
  <circle cx="544.6" cy="629.6" r="4"/><path d="M547.6 632.6 L550 635.6 M542.6 629.6 H546.6 M544.6 627.6 V631.6" stroke-width="1"/>
 </g>
 <g fill="none" stroke="#6a6a6a" stroke-width="0.9">
  <path d="M733.3 628 V625.6 H735.7 M742.3 625.6 H744.7 V628 M744.7 634.4 V636.8 H742.3 M735.7 636.8 H733.3 V634.4" stroke-dasharray="none"/>
  <path d="M741.5 629 A3 3 0 1 1 737.5 633.5 M736.2 632.3 L737.5 633.8 L739.3 633"/>
  <path d="M752.6 625.3 V637"/>
  <rect x="754.5" y="626.3" width="6" height="3.8" rx="0.5"/><rect x="754.5" y="631.7" width="9" height="3.8" rx="0.5"/>
  <rect x="774" y="628.4" width="5.8" height="5.6" rx="0.5"/>
  <path d="M776.9 625.5 V628.4 M776.9 634 V636.9 M771.2 631.2 H774 M779.8 631.2 H782.6"/>
  <rect x="812.6" y="627.3" width="11.2" height="9.5" rx="0.8"/>
  <path d="M818.2 627.5 V632.7 M816 630.6 L818.2 632.8 L820.4 630.6"/>
 </g>
 <g fill="#6a6a6a">
  <path d="M775.2 625.3 H778.6 L776.9 626.6 Z M775.2 637.1 H778.6 L776.9 635.8 Z M771.1 629.5 V632.9 L772.4 631.2 Z M782.7 629.5 V632.9 L781.4 631.2 Z"/>
  <path d="M790 629.6 V633 L791.6 631.3 Z M801.7 629.6 V633 L800.1 631.3 Z"/>
 </g>
 <path d="M792.5 635.5 L795.9 628.2 L799.3 635.5 Z M793.5 631.5 H798.3" fill="none" stroke="#6a6a6a" stroke-width="0.9"/>
</svg>
<div class="t" style="left:230.5px;top:626.2px;font-size:8.93px;letter-spacing:0.28px;line-height:11px;color:#222">View as: iPhone 11 (<span style="font-size:6.5px;color:#9a9a9a;margin:0 1.2px 0 1px">w</span>C <span style="font-size:6.5px;color:#9a9a9a;margin:0 1px 0 1px">h</span>R)</div>
<div class="t" style="left:505.4px;top:625.6px;font-size:8.65px;letter-spacing:0.28px;line-height:10px;color:#555;-webkit-text-stroke:0.05px">75%</div>
<svg class="i" style="left:0;top:0" width="1023" height="666">
 <g fill="none" stroke="#777" stroke-width="0.9">
  <rect x="9.5" y="648.4" width="9" height="9" rx="1"/><path d="M9.5 654.6 H18.5"/>
  <rect x="57.6" y="648.2" width="2" height="9.6" rx="1"/><rect x="61.8" y="648.2" width="2" height="9.6" rx="1"/>
 </g>
 <path d="M31.8 649 H39.8 L42.8 652.4 L39.8 655.8 H31.8 Z" fill="#1b7cff"/>
 <g fill="none" stroke="#b6b6b6" stroke-width="0.9">
  <path d="M80 653 L84 649 L88 653 M80.5 655 H87.5 V657.3 H80.5 Z"/>
  <path d="M107.5 648.3 V653.2 M105.5 651.3 L107.5 653.3 L109.5 651.3 M104.3 655 H110.7 V657.3 H104.3 Z"/>
  <path d="M130.9 648.3 V653.2 M128.9 650.3 L130.9 648.3 L132.9 650.3 M127.7 655 H134.1 V657.3 H127.7 Z"/>
 </g>
 <g stroke="#c8c8c8" stroke-width="0.9"><path d="M142.7 647 V658.2 M236.8 647 V658.2"/></g>
 <g fill="none" stroke="#777" stroke-width="0.9">
  <path d="M152 648.7 H157.8 Q159.6 648.7 159.6 650.5 V655.5 Q159.6 657.3 157.8 657.3 H152 Q150.2 657.3 150.2 655.5 V650.5 Q150.2 648.7 152 648.7 Z M153 648.7 V657.3 M156.8 648.7 V657.3"/>
  <circle cx="174.6" cy="649.5" r="1.5"/><circle cx="174.6" cy="656" r="1.5"/><circle cx="181.2" cy="652.8" r="1.5"/>
  <path d="M176 650.3 L179.7 652.2 M176 655.2 L179.7 653.4"/>
  <rect x="197.6" y="648.4" width="8.4" height="4" rx="2"/><rect x="197.6" y="653.4" width="8.4" height="4" rx="2"/>
  <path d="M230 648.4 L220.6 652.6 L225.5 653.3 L226.6 657.8 Z"/>
 </g>
 <g fill="none" stroke="#bdbdbd" stroke-width="0.6" stroke-dasharray="1 0.8">
  <rect x="242.6" y="647.8" width="10.2" height="10" rx="1"/>
  <path d="M242.6 651.2 H252.8 M242.6 654.4 H252.8 M246 647.8 V657.8 M249.4 647.8 V657.8"/>
 </g>
</svg>
<div class="t" style="left:256.8px;top:648px;color:#333;font-size:7.80px;letter-spacing:0.25px">BasicSample</div>
<div class="a" style="left:680px;top:379.3px;width:195px;height:233.8px;background:#ececec;border-radius:5px;box-shadow:0 0 0 0.5px rgba(0,0,0,.14),0 3px 10px rgba(0,0,0,.22)"></div>
<svg class="i" style="left:0;top:0" width="1023" height="666"><path d="M765.8 612.6 L777.3 622 L788.8 612.6 Z" fill="#ececec" stroke="rgba(0,0,0,.12)" stroke-width="0.5"/><rect x="764" y="611" width="27" height="2" fill="#ececec"/></svg>
<div class="t b" style="letter-spacing:0;left:687.6px;top:386.5px;font-size:8.35px;color:#333">Add New Constraints</div>
<div class="a" style="left:750.0999999999999px;top:400.79999999999995px;width:55.0px;height:18.2px;border-radius:3px;background:#77a5ef"></div>
<div class="a" style="left:752.8px;top:403.4px;width:49.6px;height:13px;background:#f6f6f6;border:0.6px solid #c9c9c9"></div>
<svg class="i" style="left:794.9px;top:408.4px" width="5" height="4"><path d="M0.6 0.6 L2.4 2.4 L4.2 0.6" fill="none" stroke="#666" stroke-width="0.8"/></svg>
<div class="a" style="left:754.8px;top:405.2px;width:10.4px;height:9.3px;background:#a8c8f6"></div>
<div class="t" style="left:755.1999999999999px;top:405.59999999999997px;font-size:8.08px;letter-spacing:0.26px;color:#1d1d1d;font-weight:normal">20</div>
<div class="a" style="left:706px;top:430.3px;width:50.6px;height:13px;background:#efefef;border:0.6px solid #c9c9c9"></div>
<svg class="i" style="left:749.1px;top:435.3px" width="5" height="4"><path d="M0.6 0.6 L2.4 2.4 L4.2 0.6" fill="none" stroke="#666" stroke-width="0.8"/></svg>
<div class="t" style="left:708.4px;top:432.5px;font-size:8.08px;letter-spacing:0.26px;color:#1d1d1d;font-weight:normal">165.5</div>
<div class="a" style="left:798.2px;top:430.5px;width:50.4px;height:13px;background:#efefef;border:0.6px solid #c9c9c9"></div>
<svg class="i" style="left:841.1px;top:435.5px" width="5" height="4"><path d="M0.6 0.6 L2.4 2.4 L4.2 0.6" fill="none" stroke="#666" stroke-width="0.8"/></svg>
<div class="t" style="left:800.6px;top:432.7px;font-size:8.08px;letter-spacing:0.26px;color:#1d1d1d;font-weight:normal">165.5</div>
<div class="a" style="left:752.3px;top:458.3px;width:50.4px;height:13px;background:#efefef;border:0.6px solid #c9c9c9"></div>
<svg class="i" style="left:795.1999999999999px;top:463.3px" width="5" height="4"><path d="M0.6 0.6 L2.4 2.4 L4.2 0.6" fill="none" stroke="#666" stroke-width="0.8"/></svg>
<div class="t" style="left:754.6999999999999px;top:460.5px;font-size:8.08px;letter-spacing:0.26px;color:#1d1d1d;font-weight:normal">20</div>
<svg class="i" style="left:0;top:0" width="1023" height="666">
 <path d="M777.3 419.3 V428.5 M774.4 419.5 H780.2 M774.4 428.4 H780.2" stroke="#ff3b30" stroke-width="1"/>
 <rect x="771.3" y="431.4" width="11.6" height="11" fill="#ececec" stroke="#9a9a9a" stroke-width="0.8" rx="0.5"/>
 <g stroke="#ff8f86" stroke-width="0.6" stroke-dasharray="1 0.9" fill="none">
  <path d="M759.4 437.2 H769.3 M759.4 434.8 V439.6 M769.3 434.8 V439.6"/>
  <path d="M785.3 437.2 H795.6 M785.3 434.8 V439.6 M795.6 434.8 V439.6"/>
  <path d="M777.3 445.3 V455.6 M774.9 445.3 H779.7 M774.9 455.6 H779.7"/>
 </g>
 <path d="M731.3 492.8 q0 -2 2 -2 h4.6 q2 0 2 2 v4.6 q0 2 -2 2 h-4.6 q-2 0 -2 -2 z" fill="#2b7ef7"/>
 <path d="M733.2 495.2 L735 497.2 L738.2 492.6" fill="none" stroke="#fff" stroke-width="1"/>
</svg>
<div class="t" style="left:723.6px;top:474.8px;font-size:7.99px;letter-spacing:0.26px;color:#333">Spacing to nearest neighbor</div>
<div class="t" style="left:743.6px;top:490.2px;font-size:7.99px;letter-spacing:0.26px;color:#555">Constrain to margins</div>
<div class="a" style="left:684.2px;top:502.6px;width:186px;height:1px;background:#dcdcdc"></div>
<div class="a" style="left:684.2px;top:538.4px;width:186px;height:1px;background:#dcdcdc"></div>
<div class="a" style="left:684.2px;top:590px;width:186px;height:1px;background:#dcdcdc"></div>
<div class="a" style="left:687.4px;top:508.4px;width:8.4px;height:8.4px;border-radius:2px;background:#fff;border:0.5px solid #cfcfcf"></div>
<svg class="i" style="left:699.8px;top:507.29999999999995px" width="10.2" height="10.2"><rect x="0.3" y="0.3" width="9.6" height="9.6" rx="2" fill="#f6f3ee" stroke="#d2d0cc" stroke-width="0.6"/><rect x="1.5" y="1.5" width="7.2" height="7.2" fill="#fff" stroke="#2f80f5" stroke-width="1.1"/><path d="M2 2.6 Q5.1 4.2 8.2 2.6 V4.7 H2 Z M2 7.6 Q5.1 6 8.2 7.6 V5.5 H2 Z" fill="#2f80f5"/></svg>
<div class="t" style="left:713.8px;top:508.59999999999997px;font-size:7.99px;letter-spacing:0.26px;color:#2c2c2c">Width</div>
<div class="a" style="left:816.3px;top:506.59999999999997px;width:50.7px;height:12.8px;background:#efefef;border:0.6px solid #c9c9c9"></div>
<svg class="i" style="left:858.6px;top:511.59999999999997px" width="5" height="4"><path d="M0.6 0.6 L2.4 2.4 L4.2 0.6" fill="none" stroke="#666" stroke-width="0.8"/></svg>
<div class="t" style="left:819px;top:508.7px;font-size:8.08px;letter-spacing:0.26px;color:#1d1d1d">83</div>
<div class="a" style="left:687.4px;top:523.8px;width:8.4px;height:8.4px;border-radius:2px;background:#fff;border:0.5px solid #cfcfcf"></div>
<svg class="i" style="left:699.8px;top:522.6999999999999px" width="10.2" height="10.2"><rect x="0.3" y="0.3" width="9.6" height="9.6" rx="2" fill="#f6f3ee" stroke="#d2d0cc" stroke-width="0.6"/><rect x="1.5" y="1.5" width="7.2" height="7.2" fill="#fff" stroke="#2f80f5" stroke-width="1.1"/><path d="M3.3 3 H6.9 M3.3 7.2 H6.9 M5.1 3 V7.2" fill="none" stroke="#2f80f5" stroke-width="1"/></svg>
<div class="t" style="left:713.8px;top:524.0px;font-size:7.99px;letter-spacing:0.26px;color:#2c2c2c">Height</div>
<div class="a" style="left:816.3px;top:522.0px;width:50.7px;height:12.8px;background:#efefef;border:0.6px solid #c9c9c9"></div>
<svg class="i" style="left:858.6px;top:527.0px" width="5" height="4"><path d="M0.6 0.6 L2.4 2.4 L4.2 0.6" fill="none" stroke="#666" stroke-width="0.8"/></svg>
<div class="t" style="left:819px;top:524.0999999999999px;font-size:8.08px;letter-spacing:0.26px;color:#1d1d1d">30</div>
<div class="a" style="opacity:.45;left:687.4px;top:544.5px;width:8.4px;height:8.4px;border-radius:2px;background:#fff;border:0.5px solid #cfcfcf"></div>
<svg class="i" style="opacity:.45;left:699.8px;top:543.4px" width="10.2" height="10.2"><rect x="0.3" y="0.3" width="9.6" height="9.6" rx="2" fill="#f6f3ee" stroke="#d2d0cc" stroke-width="0.6"/><rect x="1.5" y="1.6" width="7.2" height="3" fill="#fff" stroke="#7fb0f5" stroke-width="0.9"/><rect x="1.5" y="5.6" width="7.2" height="3" fill="#fff" stroke="#7fb0f5" stroke-width="0.9"/></svg>
<div class="t" style="left:713.8px;top:544.7px;font-size:7.99px;letter-spacing:0.26px;color:#b9b9b9">Equal Widths</div>
<div class="a" style="opacity:.45;left:687.4px;top:560px;width:8.4px;height:8.4px;border-radius:2px;background:#fff;border:0.5px solid #cfcfcf"></div>
<svg class="i" style="opacity:.45;left:699.8px;top:558.9px" width="10.2" height="10.2"><rect x="0.3" y="0.3" width="9.6" height="9.6" rx="2" fill="#f6f3ee" stroke="#d2d0cc" stroke-width="0.6"/><rect x="1.6" y="1.5" width="3" height="7.2" fill="#fff" stroke="#7fb0f5" stroke-width="0.9"/><rect x="5.6" y="1.5" width="3" height="7.2" fill="#fff" stroke="#7fb0f5" stroke-width="0.9"/></svg>
<div class="t" style="left:713.8px;top:560.2px;font-size:7.99px;letter-spacing:0.26px;color:#b9b9b9">Equal Heights</div>
<div class="a" style="left:687.4px;top:575.5px;width:8.4px;height:8.4px;border-radius:2px;background:#fff;border:0.5px solid #cfcfcf"></div>
<svg class="i" style="left:699.8px;top:574.4px" width="10.2" height="10.2"><rect x="0.3" y="0.3" width="9.6" height="9.6" rx="2" fill="#f6f3ee" stroke="#d2d0cc" stroke-width="0.6"/><rect x="1.5" y="1.5" width="7.2" height="7.2" fill="#fff" stroke="#2f80f5" stroke-width="1.1"/><path d="M4.3 8.6 V4.3 H8.6" fill="none" stroke="#2f80f5" stroke-width="1.1"/></svg>
<div class="t" style="left:713.8px;top:575.7px;font-size:7.99px;letter-spacing:0.26px;color:#2c2c2c">Aspect Ratio</div>
<div class="a" style="left:687.4px;top:594.5px;width:180.4px;height:11.2px;border-radius:3px;background:#f1f1f1;border:0.6px solid #8f8f8f"></div>
<div class="t" style="left:687.4px;top:595.2px;width:180.4px;text-align:center;font-size:8.08px;letter-spacing:0.26px;color:#111;font-weight:normal">Add 1 Constraint</div>
</div></body></html>
